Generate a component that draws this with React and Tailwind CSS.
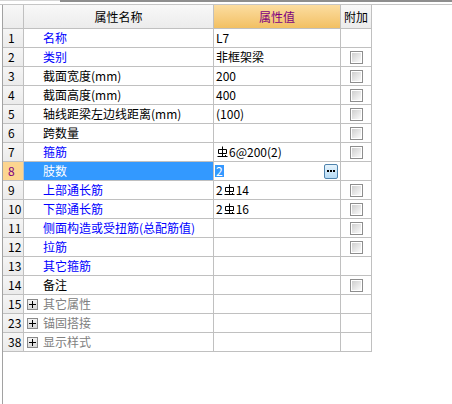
import React from 'react';

const FONT = { fontFamily: '"Noto Sans CJK SC", "Noto Sans", sans-serif' };

// rebar grade mark (HRB335 style) used in the value column
const Grade = () => (
  <svg width="11" height="12" viewBox="0 0 11 12" className="inline-block mx-[1px] align-[-1px]">
    <path d="M5.5 0.5V10.5 M1.5 3.5H9.5V7.5H1.5Z M0.5 10.5H10.5 M8.5 9V10.5" fill="none" stroke="#000" strokeWidth="1" />
  </svg>
);

const Check = () => (
  <div className="w-[13px] h-[13px] border border-[#8e8e8e] bg-white p-[1px]">
    <div className="w-full h-full bg-linear-to-br from-[#cfcfcf] to-[#fbfbfb]" />
  </div>
);

const Plus = () => (
  <div className="w-[11px] h-[11px] border border-[#8a8a8a] bg-linear-to-b from-[#f4f4f4] to-[#d8d8d8] flex items-center justify-center">
    <svg width="7" height="7" viewBox="0 0 7 7">
      <path d="M0 3.5H7 M3.5 0V7" stroke="#000" strokeWidth="1" />
    </svg>
  </div>
);

const rows = [
  { n: 1, name: '名称', blue: true, value: 'L7' },
  { n: 2, name: '类别', blue: true, value: '非框架梁', check: true },
  { n: 3, name: '截面宽度(mm)', value: '200', check: true },
  { n: 4, name: '截面高度(mm)', value: '400', check: true },
  { n: 5, name: '轴线距梁左边线距离(mm)', value: '(100)', check: true },
  { n: 6, name: '跨数量', value: '', check: true },
  { n: 7, name: '箍筋', blue: true, value: <><Grade />6@200(2)</>, check: true },
  { n: 8, name: '肢数', selected: true },
  { n: 9, name: '上部通长筋', blue: true, value: <>2<Grade />14</>, check: true },
  { n: 10, name: '下部通长筋', blue: true, value: <>2<Grade />16</>, check: true },
  { n: 11, name: '侧面构造或受扭筋(总配筋值)', blue: true, value: '', check: true },
  { n: 12, name: '拉筋', blue: true, value: '', check: true },
  { n: 13, name: '其它箍筋', blue: true, value: '' },
  { n: 14, name: '备注', value: '', check: true },
  { n: 15, name: '其它属性', group: true },
  { n: 23, name: '锚固搭接', group: true },
  { n: 38, name: '显示样式', group: true },
];

const cell = 'border-r border-b border-[#c0c0c0] h-[19px] flex items-center';

export default function App() {
  return (
    <div className="w-[452px] h-[404px] bg-white overflow-hidden flex flex-col text-[12px] text-black" style={FONT}>
      <div className="h-[5px] shrink-0 flex border-b border-[#c6c6c6]">
        <div className="w-[60px] border-t border-[#d6d6d6]" />
        <div className="flex-1 border-t-2 border-[#8e8e8e]" />
      </div>

      <div className="flex-1 ml-[2px] border-l border-[#a2a2a2]">
        <div className="grid grid-cols-[21px_190px_127px_31px] leading-none">
          {/* header */}
          <div className="h-[24px] border-r border-b border-[#c0c0c0] bg-linear-to-b from-[#f7f7f7] to-[#ececec]" />
          <div className="h-[24px] border-r border-b border-[#c0c0c0] bg-linear-to-b from-[#f8f8f8] to-[#ececec] flex items-center justify-center">
            属性名称
          </div>
          <div className="h-[24px] border-r border-b border-[#c0c0c0] bg-linear-to-b from-[#fcdda0] to-[#f2c062] flex items-center justify-center text-[#800080]">
            属性值
          </div>
          <div className="h-[24px] border-r border-b border-[#c0c0c0] bg-linear-to-b from-[#f8f8f8] to-[#ececec] flex items-center justify-center">
            附加
          </div>

          {rows.map((r) => (
            <React.Fragment key={r.n}>
              <div
                className={`${cell} pl-[5px] ${
                  r.selected ? 'bg-[#fcd590] text-[#800080]' : 'bg-linear-to-b from-[#f5f5f5] to-[#ebebeb]'
                }`}
              >
                {r.n}
              </div>

              {r.group ? (
                <div className={`${cell} pl-[3px] text-[#808080]`}>
                  <Plus />
                  <span className="ml-[5px]">{r.name}</span>
                </div>
              ) : (
                <div
                  className={`${cell} pl-[19px] ${
                    r.selected ? 'bg-[#3399ff] text-white' : r.blue ? 'text-[#0000ff]' : 'text-black'
                  }`}
                >
                  {r.name}
                </div>
              )}

              {r.selected ? (
                <div className={`${cell} pl-[1px] pr-[2px] justify-between`}>
                  <span className="bg-[#3399ff] text-white px-[1px] leading-[12px]">2</span>
                  <div className="w-[14px] h-[15px] rounded-[2px] border border-[#4f83ad] bg-linear-to-b from-[#e6f4fd] to-[#b6daf4] flex items-center justify-center gap-[1px]">
                    <span className="w-[2px] h-[2px] bg-black" />
                    <span className="w-[2px] h-[2px] bg-black" />
                    <span className="w-[2px] h-[2px] bg-black" />
                  </div>
                </div>
              ) : (
                <div className={`${cell} pl-[2px] whitespace-nowrap`}>{r.value}</div>
              )}

              <div className={`${cell} justify-center`}>{r.check && <Check />}</div>
            </React.Fragment>
          ))}
        </div>
      </div>
    </div>
  );
}
